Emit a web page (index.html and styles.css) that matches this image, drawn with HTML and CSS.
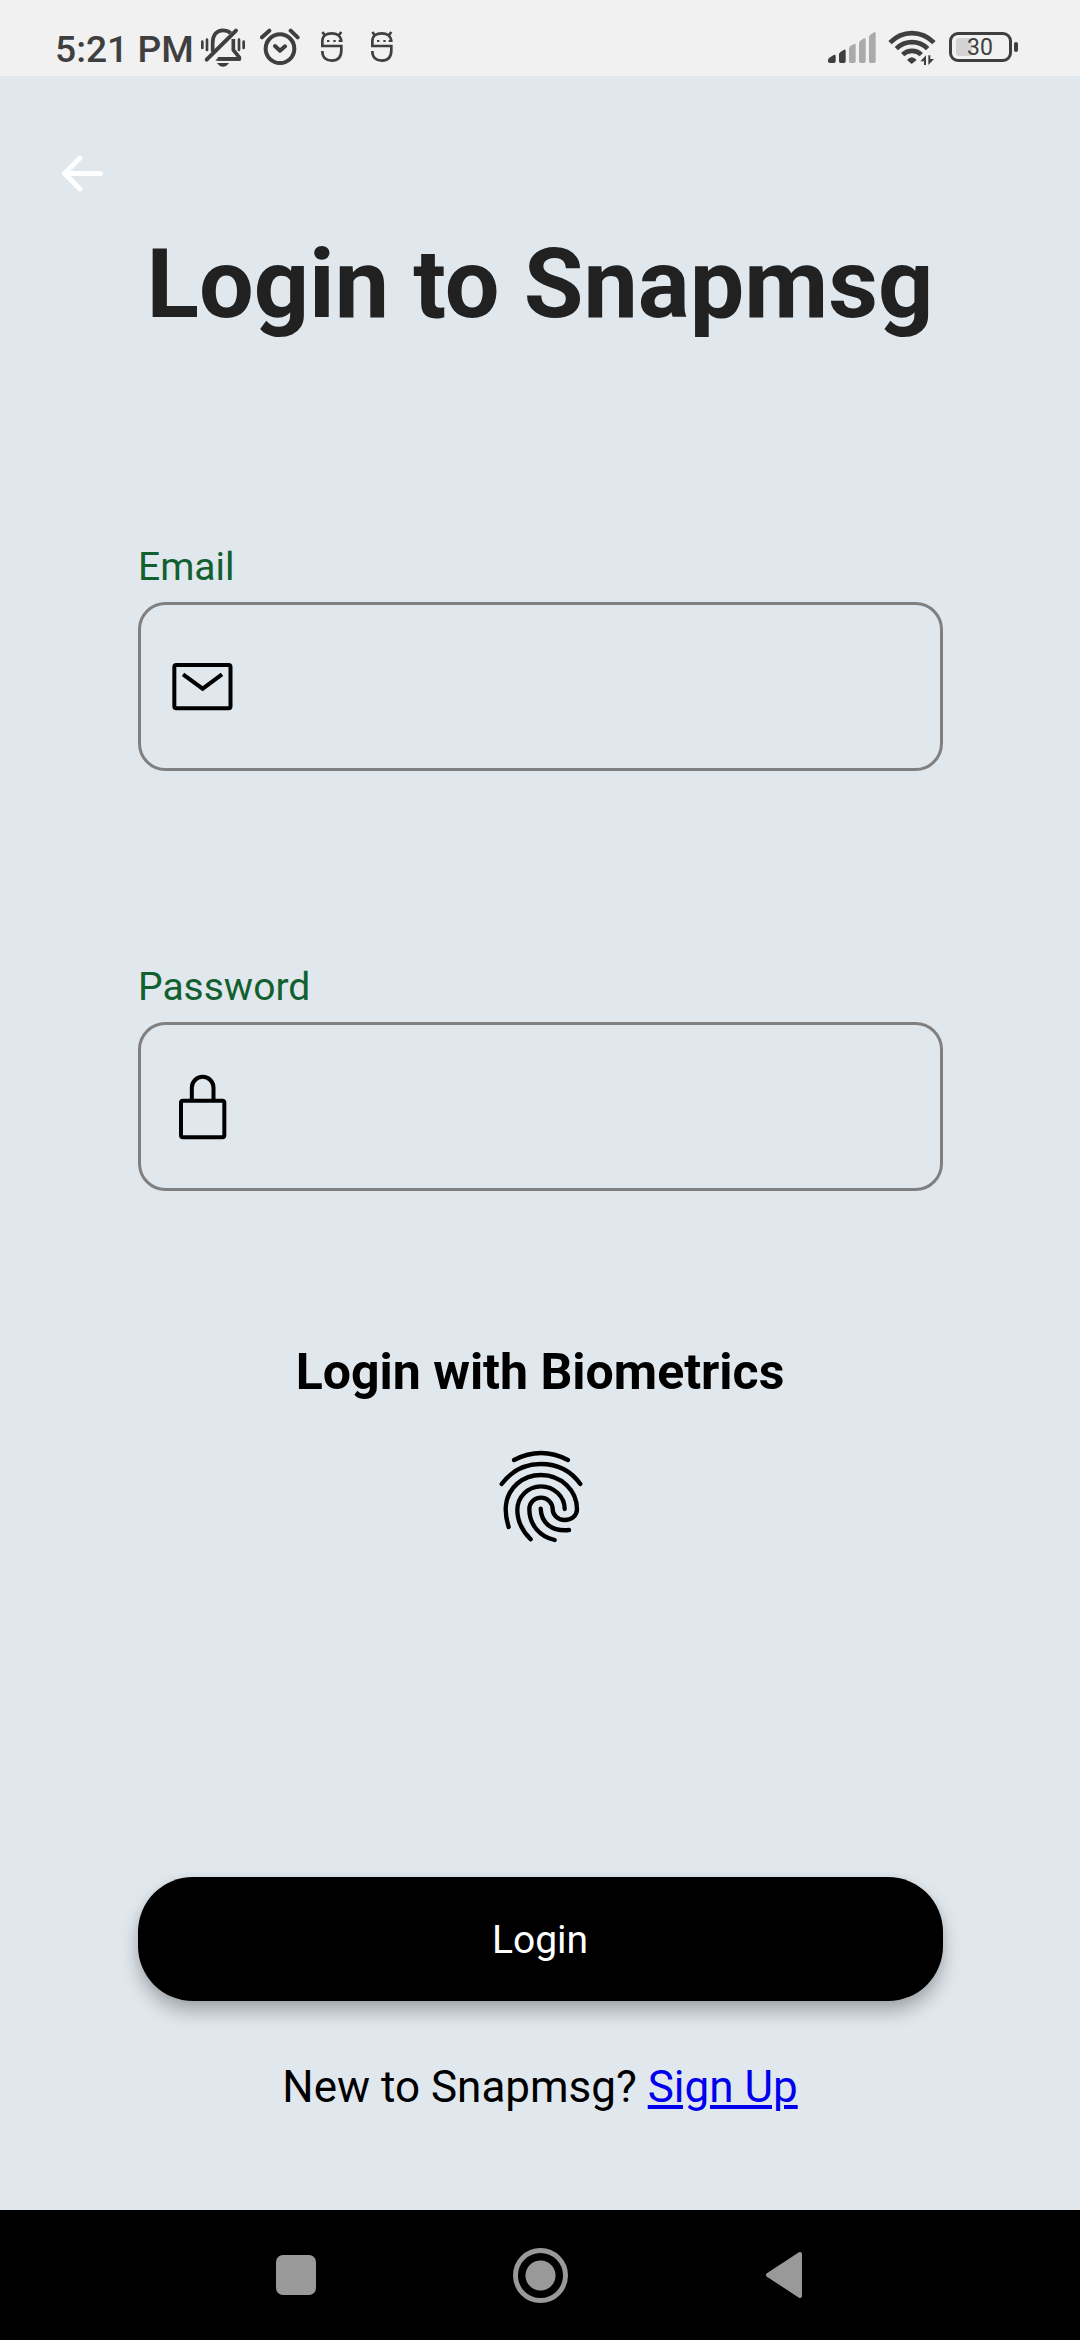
FILE: index.html
```html
<!DOCTYPE html>
<html lang="en">
<head>
<meta charset="utf-8">
<title>Login to Snapmsg</title>
<link rel="stylesheet" href="styles.css">
</head>
<body>
<div class="status-bar">
  <span class="clock">5:21 PM</span>
  <svg class="bell" viewBox="480 75 138 135" width="46" height="45" fill="none" stroke="#3f3f3f" stroke-width="11">
    <path d="M518 155V128C518 104 531 91 548 91C558 91 566 94 572 99"/>
    <path d="M500 179L588 92" stroke-width="12" stroke-linecap="round"/>
    <path d="M580 117V150L598 172V177H534" stroke-linejoin="round"/>
    <path d="M526 182L536 171H602V182Z" fill="#3f3f3f" stroke="none"/>
    <path d="M531 189H567Q560 200 549 200Q538 200 531 189Z" fill="#3f3f3f" stroke="none"/>
    <path d="M487 125V144M501 119V150M597 119V150M611 125V144" stroke-width="8" stroke-linecap="round"/>
  </svg>
  <svg class="alarm" viewBox="656 75 123 135" width="41" height="45" fill="none" stroke="#3f3f3f" stroke-width="12" stroke-linecap="round">
    <circle cx="719" cy="146" r="43"/>
    <path d="M665 112L687 92M751 92L772 112M704 138L719 152L734 139" stroke-linejoin="round"/>
  </svg>
  <svg class="bot" viewBox="838 75 72 135" width="24" height="45" fill="none" stroke="#3f3f3f" stroke-width="8">
    <path d="M902 126C902 108 889 100 873 100C857 100 845 108 845 123V138H902V150C902 173 889 182 873 182C857 182 845 173 845 153M845 96L853 106M902 96L894 106"/>
    <path d="M859 123h7M878 123h7M894 123h9" stroke-width="6"/>
  </svg>
  <svg class="bot" viewBox="988 75 72 135" width="24" height="45" fill="none" stroke="#3f3f3f" stroke-width="8">
    <path d="M1052 126C1052 108 1039 100 1023 100C1007 100 995 108 995 123V138H1052V150C1052 173 1039 182 1023 182C1007 182 995 173 995 153M995 96L1003 106M1052 96L1044 106"/>
    <path d="M1009 123h7M1028 123h7M1044 123h9" stroke-width="6"/>
  </svg>
  <svg class="signal" viewBox="81 75 144 135" width="48" height="45">
    <path fill="#3f3f3f" d="M84 174L98 165Q104 163 104 168V184Q104 189 99 189H86Q81 189 81 184V179ZM117 157L129 149Q134 147 134 152V184Q134 189 129 189H119Q114 189 114 184V162Z"/>
    <path fill="#aaa" d="M147 139L159 132Q164 130 164 135V184Q164 189 159 189H149Q144 189 144 184V144ZM177 123L189 115Q194 113 194 118V184Q194 189 189 189H179Q174 189 174 184V128ZM207 105L219 97Q224 95 224 100V184Q224 189 219 189H209Q204 189 204 184V110Z"/>
  </svg>
  <svg class="wifi" viewBox="261 75 144 135" width="48" height="45" fill="none" stroke="#3f3f3f" stroke-width="14">
    <path d="M267 128C304 90 361 90 399 128M286 146C312 120 354 120 380 146M305 164C321 149 345 149 361 164"/>
    <path d="M332 192L318 180Q332 163 347 180Z" fill="#3f3f3f" stroke="none"/>
    <path d="M375 166V195H369V184H358ZM382 195V166H388V177H399Z" fill="#3f3f3f" stroke="none"/>
  </svg>
  <div class="battery"><span class="level"></span><span class="percent">30</span></div>
  <span class="battery-tip"></span>
</div>

<main class="screen">
  <div class="toolbar">
    <svg width="44" height="40" viewBox="0 0 44 40" fill="none" stroke="#fff" stroke-width="5" stroke-linecap="round" stroke-linejoin="round">
      <path d="M40.500 20.500H4.500M20 5L4.500 20.500L20 36"/>
    </svg>
  </div>
  <h1 class="title">Login to Snapmsg</h1>

  <div class="field">
    <label class="label">Email</label>
    <div class="input">
      <svg width="62" height="50" viewBox="126 394 186 150" fill="none" stroke="#000" stroke-width="12">
        <rect x="133" y="403" width="168.500" height="130" rx="6"/>
        <path d="M159 431L218 474L276 431"/>
      </svg>
    </div>
  </div>

  <div class="field">
    <label class="label">Password</label>
    <div class="input">
      <svg width="62" height="66" viewBox="126 369 186 198" fill="none" stroke="#000" stroke-width="12">
        <rect x="153" y="449" width="130" height="110" rx="6"/>
        <path d="M185.500 449V410A32.500 32.500 0 0 1 250.500 410V449"/>
      </svg>
    </div>
  </div>

  <h2 class="biometrics">Login with Biometrics</h2>
  <svg class="fingerprint" width="120" height="130" viewBox="0 0 360 390" fill="none" stroke="#000" stroke-width="13" stroke-linecap="round">
    <path d="M102 90Q183 48 264 90"/>
    <path d="M65 162C95 122 137 102 183 102C232 102 273 123 301 162"/>
    <path d="M86 291C77 262 76 240 78 225C84 173 128 135 183 135C244 135 291 182 291 238C291 257 274 270 254 270C234 270 218 256 218 238C218 218 202 203 183 203C163 203 148 218 148 238C148 285 180 320 224 330"/>
    <path d="M152 328C126 302 112 272 112 240C112 201 144 169 183 169C222 169 254 200 254 237"/>
    <path d="M182 236C184 280 216 305 267 300"/>
  </svg>

  <button class="login">Login</button>
  <p class="signup">New to Snapmsg? <a href="#" class="link">Sign Up</a></p>
</main>

<nav class="nav-bar">
  <span class="recent"></span>
  <span class="home"></span>
  <svg class="back" width="40" height="50" viewBox="0 0 40 50"><path d="M4 25L36 4V46Z" fill="#999" stroke="#999" stroke-width="4" stroke-linejoin="round"/></svg>
</nav>
</body>
</html>
```
FILE: styles.css
```css
* { box-sizing: border-box; }
body {
  margin: 0;
  width: 1080px;
  height: 2340px;
  display: flex;
  flex-direction: column;
  overflow: hidden;
  font-family: Roboto, "Liberation Sans", sans-serif;
  background: #e0e7ed;
}

.status-bar {
  height: 76px;
  padding: 25px 62px 0 55px;
  display: flex;
  align-items: flex-start;
  background: #f1f1f1;
  color: #3f3f3f;
}
.clock {
  width: 145px;
  font-size: 37.2px;
  font-weight: 500;
  line-height: 49px;
  white-space: nowrap;
}
.alarm { margin: 0 20px 0 13px; }
.bot { margin-right: 26px; }
.signal { margin-left: auto; }
.wifi { margin: 0 13px 0 12px; }
.battery {
  position: relative;
  width: 63px;
  height: 30px;
  margin-top: 7px;
  padding-left: 18px;
  border: 3px solid #3f3f3f;
  border-radius: 9px;
}
.level {
  position: absolute;
  left: 4px;
  top: 3px;
  width: 16px;
  height: 18px;
  border-radius: 3px;
  background: #d3d3d3;
}
.percent {
  position: relative;
  left: -3px;
  display: block;
  font-size: 23px;
  line-height: 25px;
}
.battery-tip {
  width: 4px;
  height: 10px;
  margin: 17px 0 0 2px;
  border-radius: 2px;
  background: #3f3f3f;
}

.screen {
  height: 2134px;
  display: flex;
  flex-direction: column;
}
.toolbar {
  height: 152px;
  padding: 77px 0 0 60px;
}
.title {
  margin: 0 0 204px;
  font-size: 97px;
  line-height: 112px;
  font-weight: 700;
  text-align: center;
  color: #212121;
}

.field {
  height: 227px;
  margin: 0 137.5px 193px 138px;
}
.label {
  display: block;
  margin-bottom: 12px;
  font-size: 39px;
  line-height: 46px;
  color: #12602f;
}
.input {
  height: 169px;
  padding-left: 31px;
  display: flex;
  align-items: center;
  border: 3px solid #808080;
  border-radius: 27.5px;
}

.biometrics {
  margin: -41px 0 29px;
  font-size: 50px;
  line-height: 58px;
  font-weight: 700;
  text-align: center;
  color: #000;
}
.fingerprint { align-self: center; }
.login {
  height: 124px;
  margin: 317px 137.5px 60px;
  padding: 2px 0 0;
  border: 0;
  border-radius: 55px;
  background: #000;
  color: #fff;
  font: 400 39px/46px Roboto, "Liberation Sans", sans-serif;
  box-shadow: 0 11px 18px rgba(0, 0, 0, .26), 0 1px 8px rgba(0, 0, 0, .06);
}
.signup {
  margin: 0;
  font-size: 44px;
  line-height: 52px;
  text-align: center;
  color: #000;
}
.link { color: #0000ee; }

.nav-bar {
  height: 130px;
  padding: 0 276px;
  display: flex;
  align-items: center;
  justify-content: space-between;
  background: #000;
}
.recent {
  width: 40px;
  height: 40px;
  border-radius: 7px;
  background: #999;
}
.home {
  width: 55px;
  height: 55px;
  border: 5px solid #999;
  border-radius: 50%;
  background: radial-gradient(circle, #999 14.5px, transparent 15.5px);
}
```
